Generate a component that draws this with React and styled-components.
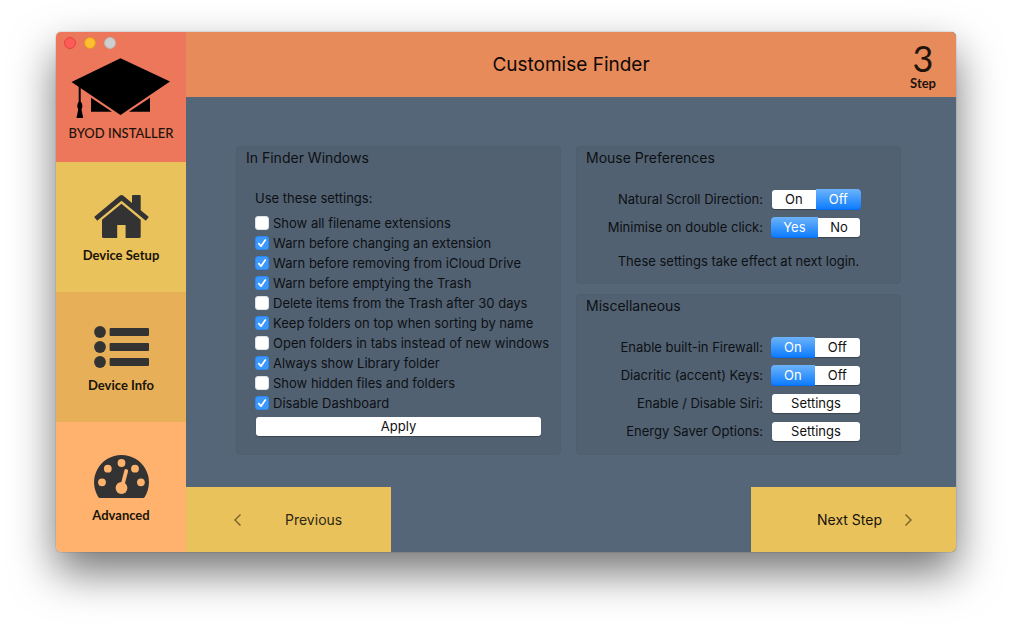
import React, { useState } from "react";
import styled, { createGlobalStyle, css } from "styled-components";

const GlobalStyle = createGlobalStyle`
  *, *::before, *::after { box-sizing: border-box; }
  body { margin: 0; background: #fff; }
`;

const textFont = `Inter, "Liberation Sans", sans-serif`;
const displayFont = `Lato, "Open Sans", sans-serif`;

const Page = styled.div`
  padding: 32px 56px 80px;
  font: 13px/18px ${textFont};
  color: #0c1014;
`;

const Window = styled.div`
  position: relative;
  display: flex;
  border-radius: 5px;
  box-shadow: 0 0 1px rgba(0, 0, 0, 0.7), 0 20px 44px rgba(0, 0, 0, 0.55);
`;

const Sidebar = styled.nav`
  flex: none;
  width: 130px;
  display: flex;
  flex-direction: column;
  border-radius: 5px 0 0 5px;
  overflow: hidden;
`;

const TrafficLights = styled.div`
  position: absolute;
  top: 5px;
  left: 8px;
  display: flex;
  gap: 8px;
`;

const Light = styled.button`
  width: 12px;
  height: 12px;
  padding: 0;
  border: 1px solid ${(p) => p.$edge};
  border-radius: 50%;
  background: ${(p) => p.$fill};
`;

const tile = css`
  flex: 1 0 130px;
  display: flex;
  flex-direction: column;
  align-items: center;
  font: 500 13px/18px ${displayFont};
  color: #1a1309;
`;

const Brand = styled.div`
  ${tile}
  gap: 6px;
  padding-top: 26px;
  background: #ec775b;
`;

const NavTile = styled.a`
  ${tile}
  gap: 8px;
  padding-top: 33px;
  font-weight: 700;
  text-decoration: none;
  background: ${(p) => p.$fill};
`;

const Main = styled.main`
  flex: 1;
  min-width: 0;
  display: flex;
  flex-direction: column;
  background: #556678;
  border-radius: 0 5px 5px 0;
  overflow: hidden;
`;

const Header = styled.header`
  display: grid;
  grid-template-columns: 1fr auto 1fr;
  align-items: center;
  height: 65px;
  padding: 0 20px;
  background: #e88b5a;
`;

const Title = styled.h1`
  grid-column: 2;
  margin: 0;
  font: 400 19px/24px ${textFont};
  color: #0d0805;
`;

const StepBadge = styled.div`
  justify-self: end;
  display: flex;
  flex-direction: column;
  align-items: center;
  font: 700 13px/14px ${displayFont};
  color: #1f140c;
`;

const StepNumber = styled.span`
  font-size: 36px;
  font-weight: 400;
  line-height: 36px;
`;

const Content = styled.div`
  flex: 1;
  display: grid;
  grid-template-columns: repeat(2, minmax(0, 1fr));
  gap: 15px;
  padding: 49px 55px 32px 50px;
`;

const Column = styled.div`
  display: flex;
  flex-direction: column;
  gap: 10px;
`;

const Panel = styled.section`
  flex: ${(p) => (p.$grow ? 1 : "none")};
  padding: 2px 9px ${(p) => p.$bottom}px;
  border: 1px solid #4f5f6f;
  border-radius: 4px;
  background: #526171;
`;

const PanelTitle = styled.h2`
  margin: 0;
  font: 400 14px/18px ${textFont};
`;

const Settings = styled.form`
  display: flex;
  flex-direction: column;
  padding: 22px 10px 0 9px;
`;

const Hint = styled.p`
  margin: 0 0 6px;
`;

const CheckRow = styled.label`
  display: flex;
  align-items: center;
  gap: 4px;
  height: 20px;
  white-space: nowrap;
`;

const CheckBox = styled.span`
  flex: none;
  display: grid;
  width: 14px;
  height: 14px;

  input, svg {
    grid-area: 1 / 1;
    width: 14px;
    height: 14px;
    margin: 0;
  }
  input {
    appearance: none;
    border: 1px solid #dfe2e5;
    border-radius: 3px;
    background: #fff;
  }
  input:checked {
    border-color: #2f87f5;
    background: #3b99fc;
  }
  svg { pointer-events: none; visibility: hidden; }
  input:checked + svg { visibility: visible; }
`;

const PushButton = styled.button`
  width: ${(p) => (p.$wide ? "auto" : "88px")};
  height: 19px;
  margin: ${(p) => (p.$wide ? "4px 0 0 1px" : "0")};
  padding: 0;
  border: 0;
  border-radius: 3px;
  background: #fff;
  box-shadow: 0 1px 1px rgba(0, 0, 0, 0.3);
  font: 13px/19px ${textFont};
  color: #101010;
`;

const Options = styled.div`
  padding: 18px 31px 0 0;
`;

const OptionRow = styled.div`
  display: flex;
  align-items: center;
  justify-content: flex-end;
  gap: 9px;
  height: 28px;
  white-space: nowrap;
`;

const Segments = styled.div`
  display: flex;
  width: 88px;
  height: 19px;
  border-radius: 3px;
  background: #fff;
  box-shadow: 0 1px 1px rgba(0, 0, 0, 0.3);
`;

const Segment = styled.button`
  flex: 1 1 auto;
  padding: 0;
  border: 0;
  background: transparent;
  font: 13px/19px ${textFont};
  color: #101010;

  &[aria-checked="true"] {
    margin: -1px 0;
    color: #fff;
    background: linear-gradient(#6cb3fa, #0a7aff);
    box-shadow: inset 0 -1px #0a6cf0;
  }
  &[aria-checked="true"]:first-child {
    margin-left: -1px;
    border-radius: 4px 0 0 4px;
  }
  &[aria-checked="true"]:last-child {
    margin-right: -1px;
    border-radius: 0 4px 4px 0;
  }
`;

const Note = styled.p`
  margin: 11px 0 0;
  text-align: center;
`;

const Footer = styled.footer`
  display: flex;
  justify-content: space-between;
`;

const StepButton = styled.button`
  display: flex;
  align-items: center;
  justify-content: ${(p) => (p.$next ? "flex-end" : "flex-start")};
  gap: ${(p) => (p.$next ? 23 : 44)}px;
  width: 205px;
  height: 65px;
  padding: 0 44px 0 48px;
  border: 0;
  background: #e9c25c;
  font: 14px/20px ${textFont};
  color: ${(p) => (p.$next ? "#17130a" : "#2f2814")};
`;

const CapIcon = () => (
  <svg width="100" height="60" viewBox="0 0 100 60" aria-hidden="true">
    <path d="M.5 24 49.500 .3 99 23.500 49.500 57Z" />
    <path d="M20 39.700V53.700H41Z" />
    <path d="M79 39.700V53.700H58Z" />
    <path d="M7.700 27H9.700V43.500C11.800 46 11.800 49 10.500 51.500L12.200 60H5.500L7.200 51.500C5.900 49 5.900 46 7.700 43.500Z" />
  </svg>
);

const HomeIcon = () => (
  <svg width="55" height="43" viewBox="0 0 55 43" fill="#333" aria-hidden="true">
    <path d="M27.500 8.700 8 24.700V41.500Q8 43 9.500 43H23.200V30H31.600V43H45.200Q46.700 43 46.700 41.500V24.700Z" />
    <path d="M25.600.8Q27.500-.7 29.400.8L38 8V1Q38 0 39 0H45.700Q46.700 0 46.700 1V15.300L54.300 21.600Q54.800 22.100 54.400 22.600L52.200 25.200Q51.700 25.600 51.200 25.200L27.500 5.700 3.800 25.200Q3.300 25.600 2.800 25.200L.6 22.600Q.2 22.100 .7 21.600Z" />
  </svg>
);

const ListIcon = () => (
  <svg width="55" height="43" viewBox="0 0 55 43" fill="#333" aria-hidden="true">
    {[7, 22, 37].map((y) => (
      <g key={y}>
        <circle cx="6" cy={y} r="5.900" />
        <rect x="15.600" y={y - 4} width="39.400" height="8" rx="1" />
      </g>
    ))}
  </svg>
);

const GaugeIcon = () => (
  <svg width="55" height="43" viewBox="0 0 55 43" fill="#333" aria-hidden="true">
    <path d="M27.500 0A27.400 27.400 0 0 1 50.600 42.200Q50.100 43 49.200 43H5.800Q4.900 43 4.400 42.200A27.400 27.400 0 0 1 27.500 0Z" />
    <g fill="#ffb26d">
      <circle cx="8" cy="27.300" r="3.900" />
      <circle cx="13.800" cy="13.700" r="3.900" />
      <circle cx="27.500" cy="8" r="3.900" />
      <circle cx="41" cy="13.700" r="3.900" />
      <circle cx="46.900" cy="27.300" r="3.900" />
      <circle cx="27.500" cy="33" r="5.900" />
    </g>
    <path d="M28.300 31 32.200 16" stroke="#ffb26d" strokeWidth="3.800" strokeLinecap="round" />
  </svg>
);

const Tick = () => (
  <svg viewBox="0 0 14 14" fill="none" stroke="#fff" strokeWidth="1.700" strokeLinecap="round" strokeLinejoin="round" aria-hidden="true">
    <path d="M3.800 7.600 6 10.200 10.300 3.900" />
  </svg>
);

const Chevron = ({ next }) => (
  <svg width="7" height="12" viewBox="0 0 7 12" fill="none" stroke="#75602d" strokeWidth="1.400" aria-hidden="true">
    <path d={next ? "M.5.5 6 6 .5 11.500" : "M6.500.5 1 6 6.500 11.500"} />
  </svg>
);

const finderSettings = [
  ["Show all filename extensions", false],
  ["Warn before changing an extension", true],
  ["Warn before removing from iCloud Drive", true],
  ["Warn before emptying the Trash", true],
  ["Delete items from the Trash after 30 days", false],
  ["Keep folders on top when sorting by name", true],
  ["Open folders in tabs instead of new windows", false],
  ["Always show Library folder", true],
  ["Show hidden files and folders", false],
  ["Disable Dashboard", true],
];

function SegmentOption({ id, label, choices, initial }) {
  const [value, setValue] = useState(initial);
  return (
    <OptionRow>
      <span id={id}>{label}</span>
      <Segments role="radiogroup" aria-labelledby={id}>
        {choices.map((choice) => (
          <Segment
            key={choice}
            type="button"
            role="radio"
            aria-checked={choice === value}
            onClick={() => setValue(choice)}
          >
            {choice}
          </Segment>
        ))}
      </Segments>
    </OptionRow>
  );
}

function ButtonOption({ id, label }) {
  return (
    <OptionRow>
      <label htmlFor={id}>{label}</label>
      <PushButton id={id} type="button">Settings</PushButton>
    </OptionRow>
  );
}

export default function App() {
  return (
    <Page>
      <GlobalStyle />
      <Window>
        <Sidebar>
          <Brand>
            <CapIcon />
            BYOD INSTALLER
          </Brand>
          <NavTile href="#setup" $fill="#e9c25c"><HomeIcon />Device Setup</NavTile>
          <NavTile href="#info" $fill="#e7b058"><ListIcon />Device Info</NavTile>
          <NavTile href="#advanced" $fill="#ffb26d"><GaugeIcon />Advanced</NavTile>
        </Sidebar>
        <Main>
          <Header>
            <Title>Customise Finder</Title>
            <StepBadge><StepNumber>3</StepNumber>Step</StepBadge>
          </Header>
          <Content>
            <Panel $bottom={18}>
              <PanelTitle>In Finder Windows</PanelTitle>
              <Settings onSubmit={(e) => e.preventDefault()}>
                <Hint>Use these settings:</Hint>
                {finderSettings.map(([label, on]) => (
                  <CheckRow key={label}>
                    <CheckBox>
                      <input type="checkbox" defaultChecked={on} />
                      <Tick />
                    </CheckBox>
                    {label}
                  </CheckRow>
                ))}
                <PushButton type="submit" $wide>Apply</PushButton>
              </Settings>
            </Panel>
            <Column>
              <Panel $bottom={13}>
                <PanelTitle>Mouse Preferences</PanelTitle>
                <Options>
                  <SegmentOption id="scroll" label="Natural Scroll Direction:" choices={["On", "Off"]} initial="Off" />
                  <SegmentOption id="minimise" label="Minimise on double click:" choices={["Yes", "No"]} initial="Yes" />
                </Options>
                <Note>These settings take effect at next login.</Note>
              </Panel>
              <Panel $grow $bottom={9}>
                <PanelTitle>Miscellaneous</PanelTitle>
                <Options>
                  <SegmentOption id="firewall" label="Enable built-in Firewall:" choices={["On", "Off"]} initial="On" />
                  <SegmentOption id="accents" label="Diacritic (accent) Keys:" choices={["On", "Off"]} initial="On" />
                  <ButtonOption id="siri" label="Enable / Disable Siri:" />
                  <ButtonOption id="energy" label="Energy Saver Options:" />
                </Options>
              </Panel>
            </Column>
          </Content>
          <Footer>
            <StepButton type="button"><Chevron />Previous</StepButton>
            <StepButton type="button" $next>Next Step<Chevron next /></StepButton>
          </Footer>
        </Main>
        <TrafficLights>
          <Light type="button" aria-label="Close" $fill="#fc5b57" $edge="#e2443f" />
          <Light type="button" aria-label="Minimise" $fill="#fdbe2f" $edge="#e09d1c" />
          <Light type="button" aria-label="Zoom" disabled $fill="#cfcfcf" $edge="#bdb5b2" />
        </TrafficLights>
      </Window>
    </Page>
  );
}
